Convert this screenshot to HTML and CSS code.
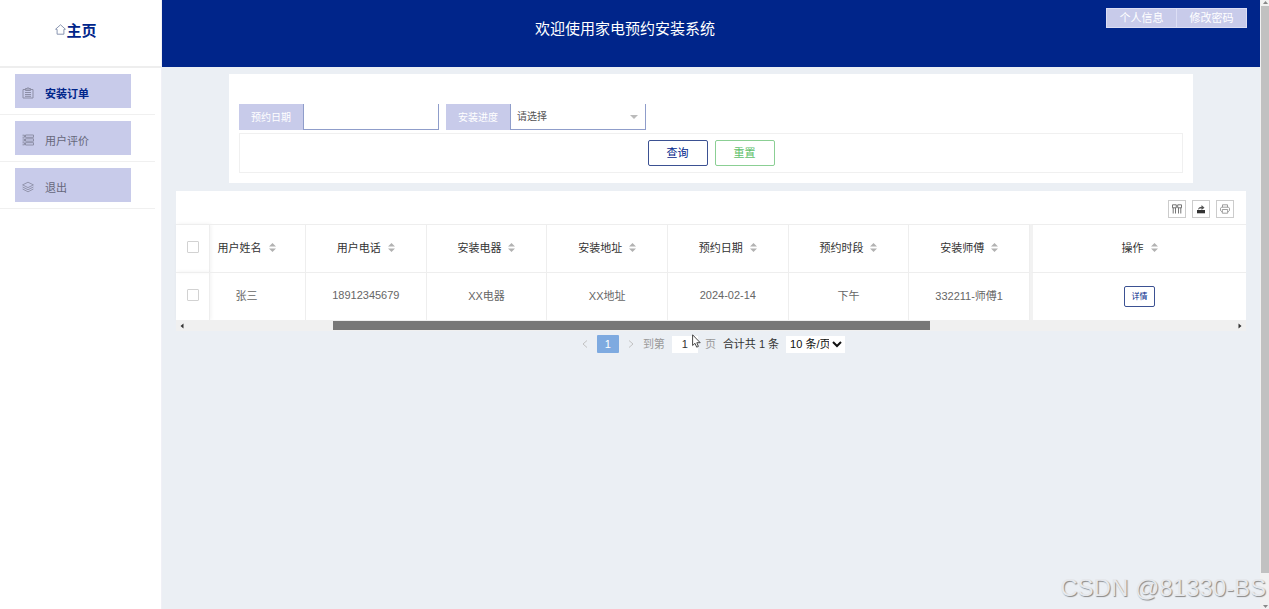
FILE: index.html
```
<!DOCTYPE html>
<html lang="zh-CN">
<head>
    <meta charset="UTF-8">
    <meta name="viewport" content="width=device-width, initial-scale=1.0">
    <title>家电预约安装系统</title>
    <link rel="stylesheet" href="styles.css">
</head>
<body>
    <svg class="sprite" width="0" height="0">
        <symbol id="sort" viewBox="0 0 7 9">
            <path d="M3.5 0 L7 3.6 H0 Z M0 5.4 H7 L3.5 9 Z" fill="#b2b2b2"/>
        </symbol>
    </svg>

    <div class="layout">
        <aside class="sidebar">
            <a class="logo" href="#">
                <svg width="11" height="11" viewBox="0 0 11 11" fill="none" stroke="#7d8aa8" stroke-width="0.9"><path d="M0.6 5.2 L5.5 0.8 L10.4 5.2 L8.9 5.4 V10.2 H2.1 V5.4 Z"/></svg>
                <span>主页</span>
            </a>
            <ul class="menu">
                <li>
                    <a class="active" href="#">
                        <svg width="12" height="12" viewBox="0 0 12 12" fill="none" stroke="#8c8ea6"><path d="M3.5 2.5 H1 V11 H11 V2.5 H8.5"/><path d="M3.5 3.5 V1.5 H5 L6 0.6 L7 1.5 H8.5 V3.5 Z" fill="#a9abc4"/><path d="M3 5.5 H9 M3 7.5 H9 M3 9.3 H9"/></svg>
                        <span>安装订单</span>
                    </a>
                </li>
                <li>
                    <a href="#">
                        <svg width="12" height="12" viewBox="0 0 12 12" fill="none" stroke="#8c8ea6"><path d="M3.5 1 H11.5 V3.3 H3.5 Z M3.5 4.8 H11.5 V7.2 H3.5 Z M3.5 8.7 H11.5 V11 H3.5 Z"/><path d="M0.5 1.2 H2.5 V3.2 H0.5 M0.5 5 H2.5 V7 H0.5 M0.5 8.8 H2.5 V10.8 H0.5"/></svg>
                        <span>用户评价</span>
                    </a>
                </li>
                <li>
                    <a href="#">
                        <svg width="12" height="12" viewBox="0 0 12 12" fill="none" stroke="#8c8ea6" stroke-width="0.9"><path d="M6 1.2 L11.4 3.9 L6 6.6 L0.6 3.9 Z"/><path d="M0.6 6 L6 8.7 L11.4 6 M0.6 8 L6 10.8 L11.4 8"/></svg>
                        <span>退出</span>
                    </a>
                </li>
            </ul>
        </aside>

        <div class="main">
            <header class="header">
                <h1>欢迎使用家电预约安装系统</h1>
                <div class="user-btns">
                    <button type="button">个人信息</button>
                    <button type="button">修改密码</button>
                </div>
            </header>

            <form class="search">
                <div class="fields">
                    <div class="field">
                        <label for="date">预约日期</label>
                        <input id="date" type="text">
                    </div>
                    <div class="field">
                        <label for="progress">安装进度</label>
                        <select id="progress">
                            <option>请选择</option>
                        </select>
                    </div>
                </div>
                <div class="actions">
                    <button class="btn btn-query" type="button">查询</button>
                    <button class="btn btn-reset" type="reset">重置</button>
                </div>
            </form>

            <section class="table-box">
                <div class="toolbar">
                    <button type="button" aria-label="筛选列">
                        <svg width="10" height="10" viewBox="0 0 10 10" fill="none" stroke="#666" stroke-width="0.9"><path d="M0.5 0.8 H4.3 V3.8 H0.5 Z M5.7 0.8 H9.5 V3.8 H5.7 Z M1.2 3.8 V9.5 M3.5 3.8 V9.5 M6.5 3.8 V9.5 M8.8 3.8 V9.5"/></svg>
                    </button>
                    <button type="button" aria-label="导出">
                        <svg width="10" height="10" viewBox="0 0 10 10"><path d="M1 6 H9 V9.3 H1 Z" fill="#333"/><path d="M2 6 C2.2 3.6 3.5 2.7 5.5 2.7 V1 L8.5 3.7 L5.5 6 V4.6 C4 4.5 3 5 2 6 Z" fill="#555"/></svg>
                    </button>
                    <button type="button" aria-label="打印">
                        <svg width="10" height="10" viewBox="0 0 10 10" fill="none" stroke="#888" stroke-width="0.8"><path d="M2.5 3.2 V0.8 H7.5 V3.2 M2.3 7.5 H1.5 L0.5 6.5 V4.2 L1.5 3.2 H8.5 L9.5 4.2 V6.5 L8.5 7.5 H7.7 M2.3 5.5 H7.7 V9.2 H2.3 Z"/></svg>
                    </button>
                </div>
                <table>
                    <colgroup>
                        <col class="col-check">
                        <col class="col-name">
                        <col span="6">
                        <col class="col-op">
                    </colgroup>
                    <thead>
                        <tr>
                            <th class="check"><input type="checkbox" aria-label="全选"></th>
                            <th class="name">用户姓名<svg class="sort"><use href="#sort"/></svg></th>
                            <th>用户电话<svg class="sort"><use href="#sort"/></svg></th>
                            <th>安装电器<svg class="sort"><use href="#sort"/></svg></th>
                            <th>安装地址<svg class="sort"><use href="#sort"/></svg></th>
                            <th>预约日期<svg class="sort"><use href="#sort"/></svg></th>
                            <th>预约时段<svg class="sort"><use href="#sort"/></svg></th>
                            <th>安装师傅<svg class="sort"><use href="#sort"/></svg></th>
                            <th class="op">操作<svg class="sort"><use href="#sort"/></svg></th>
                        </tr>
                    </thead>
                    <tbody>
                        <tr>
                            <td class="check"><input type="checkbox" aria-label="选择张三"></td>
                            <td class="name">张三</td>
                            <td>18912345679</td>
                            <td>XX电器</td>
                            <td>XX地址</td>
                            <td>2024-02-14</td>
                            <td>下午</td>
                            <td>332211-师傅1</td>
                            <td class="op"><button class="detail" type="button">详情</button></td>
                        </tr>
                    </tbody>
                </table>
                <div class="hscroll">
                    <svg width="4" height="6" viewBox="0 0 4 6"><path d="M3.5 0.5 V5.5 L0.5 3 Z" fill="#333"/></svg>
                    <div class="track"><div class="thumb"></div></div>
                    <svg width="4" height="6" viewBox="0 0 4 6"><path d="M0.5 0.5 V5.5 L3.5 3 Z" fill="#333"/></svg>
                </div>
            </section>

            <div class="pager">
                <button class="arrow" type="button" aria-label="上一页"><svg width="6" height="8" viewBox="0 0 6 8" fill="none" stroke="#c2c2c2"><path d="M5 0.5 L1 4 L5 7.5"/></svg></button>
                <button class="current" type="button">1</button>
                <button class="arrow" type="button" aria-label="下一页"><svg width="6" height="8" viewBox="0 0 6 8" fill="none" stroke="#c2c2c2"><path d="M1 0.5 L5 4 L1 7.5"/></svg></button>
                <label for="page">到第</label>
                <input id="page" type="text" value="1">
                <span class="unit">页</span>
                <span class="total">合计共 1 条</span>
                <select aria-label="每页条数">
                    <option>10 条/页</option>
                </select>
            </div>
        </div>

        <div class="vscroll">
            <svg width="5" height="3" viewBox="0 0 5 3"><path d="M0 3 L2.5 0 L5 3 Z" fill="#888"/></svg>
            <div class="thumb"></div>
            <svg width="5" height="3" viewBox="0 0 5 3"><path d="M0 0 L2.5 3 L5 0 Z" fill="#888"/></svg>
        </div>
    </div>

    <svg class="cursor" width="9" height="14" viewBox="0 0 9 14"><path d="M0.6 0.8 V11.5 L3 9.3 L4.7 13.2 L6.4 12.4 L4.8 8.7 H8.2 Z" fill="#fff" stroke="#333" stroke-width="0.9"/></svg>
    <div class="watermark">CSDN @81330-BS</div>
</body>
</html>
```

FILE: styles.css
```
* {
    box-sizing: border-box;
}

body {
    margin: 0;
    font-family: "Liberation Sans", "Noto Sans CJK SC", sans-serif;
    font-size: 11px;
    color: #666;
    background-color: #ebeff4;
    overflow: hidden;
}

button, input, select {
    font-family: inherit;
    font-size: inherit;
    margin: 0;
}

button {
    cursor: pointer;
    padding: 0 0 2px;
}

a {
    text-decoration: none;
    color: inherit;
}

svg {
    flex: none;
}

.sprite {
    position: absolute;
}

.layout {
    display: flex;
    height: 100vh;
}

/* sidebar */
.sidebar {
    flex: none;
    width: 162px;
    background-color: #fff;
    border-right: 1px solid #f0f0f6;
}

.logo {
    display: flex;
    align-items: center;
    justify-content: center;
    height: 68px;
    padding: 0 9px 8px 0;
    border-bottom: 2px solid #eee;
    color: #00258a;
    font-size: 15px;
    font-weight: bold;
}

.menu {
    list-style: none;
    margin: 0 6px 0 0;
    padding: 0;
}

.menu li {
    padding: 6px 24px 6px 15px;
    border-bottom: 1px solid #f0f0f0;
}

.menu a {
    display: flex;
    align-items: center;
    gap: 11px;
    height: 34px;
    padding: 3px 7px 0;
    background-color: #c8cbea;
    color: #66677a;
}

.menu a.active {
    color: #00258a;
    font-weight: bold;
}

/* main area */
.main {
    flex: 1;
    min-width: 0;
}

.header {
    display: flex;
    align-items: flex-start;
    gap: 18px;
    height: 67px;
    padding: 8px 13px 0 0;
    background-color: #00258a;
}

.header h1 {
    flex: 1;
    margin: 0;
    padding-top: 10px;
    color: #fff;
    font-size: 15px;
    line-height: 22px;
    font-weight: normal;
    text-align: center;
}

.user-btns {
    display: flex;
}

.user-btns button {
    width: 71px;
    height: 20px;
    border: 1px solid #dcdef4;
    background-color: #c8cbea;
    color: #fff;
}

.user-btns button + button {
    width: 70px;
    border-left: none;
}

.search {
    margin: 7px 67px 0;
    padding: 30px 10px 10px;
    background-color: #fff;
}

.fields {
    display: flex;
    gap: 7px;
    font-size: 10px;
}

.field {
    display: flex;
    width: 200px;
    height: 26px;
}

.field label {
    display: flex;
    align-items: center;
    justify-content: center;
    width: 64px;
    padding-bottom: 2px;
    background-color: #c8cbea;
    color: #fff;
}

.field input, .field select {
    flex: 1;
    min-width: 0;
    padding: 0 6px;
    border: 1px solid #8f9dca;
    border-top: none;
    border-radius: 0;
    background-color: #fff;
    color: #555;
}

.field select {
    appearance: none;
    background: #fff url("data:image/svg+xml,%3Csvg xmlns='http://www.w3.org/2000/svg' width='8' height='4'%3E%3Cpath d='M0 0H8L4 4Z' fill='%23bbb'/%3E%3C/svg%3E") no-repeat right 7px center;
}

.actions {
    display: flex;
    justify-content: center;
    gap: 7px;
    margin-top: 3px;
    padding: 6px 0;
    border: 1px solid #f0f0f0;
}

.btn {
    width: 60px;
    height: 26px;
    border-radius: 2px;
    background-color: #fff;
}

.btn-query {
    border: 1px solid #3b5192;
    color: #00258a;
}

.btn-reset {
    border: 1px solid #8bcf94;
    color: #5dc069;
}

/* table */
.table-box {
    margin: 8px 14px 0;
    background-color: #fff;
}

.toolbar {
    display: flex;
    align-items: center;
    justify-content: flex-end;
    gap: 6px;
    height: 33px;
    padding: 2px 12px 0 0;
}

.toolbar button {
    display: flex;
    align-items: center;
    justify-content: center;
    width: 18px;
    height: 18px;
    padding: 0;
    border: 1px solid #ccc;
    background-color: #fff;
}

table {
    width: 100%;
    table-layout: fixed;
    border-collapse: separate;
    border-spacing: 0;
}

.col-check {
    width: 34px;
}

.col-name {
    width: 96px;
}

.col-op {
    width: 216px;
}

th, td {
    height: 48px;
    padding: 0 0 4px;
    border-top: 1px solid #eee;
    border-right: 1px solid #eee;
    font-weight: normal;
    text-align: center;
    white-space: nowrap;
}

th {
    color: #333;
}

.check {
    box-shadow: 1px 0 4px rgba(0, 0, 0, 0.06);
}

.check input {
    display: block;
    appearance: none;
    width: 12px;
    height: 12px;
    margin: 0 auto;
    border: 1px solid #d2d2d2;
    border-radius: 1px;
    background-color: #fff;
}

.name {
    padding-right: 22px;
}

.op {
    border-left: 3px solid #f2f2f2;
    border-right: none;
}

td.op {
    padding-bottom: 0;
}

.sort {
    width: 7px;
    height: 9px;
    margin-left: 7px;
    vertical-align: 0;
}

.detail {
    width: 31px;
    height: 21px;
    border: 1px solid #3b5192;
    border-radius: 2px;
    background-color: #fff;
    color: #00258a;
    font-size: 8px;
}

.hscroll {
    display: flex;
    align-items: center;
    height: 11px;
    padding: 0 4px;
    background-color: #f0f0f0;
}

.hscroll .track {
    flex: 1;
    padding-left: 14%;
}

.hscroll .thumb {
    width: 66%;
    height: 9px;
    background-color: #787878;
}

.pager {
    display: flex;
    align-items: center;
    justify-content: center;
    height: 18px;
    margin-top: 4px;
    color: #999;
}

.pager label, .pager span {
    padding-bottom: 2px;
}

.pager .arrow {
    display: flex;
    padding: 0 5px;
    border: none;
    background: none;
}

.pager .current {
    width: 22px;
    height: 18px;
    margin: 0 4px;
    padding: 0;
    border: none;
    border-radius: 1px;
    background-color: #7eaae0;
    color: #fff;
}

.pager label {
    margin-left: 4px;
}

.pager input {
    width: 26px;
    height: 17px;
    margin: 0 7px;
    padding: 0;
    border: none;
    background-color: #fff;
    color: #333;
    text-align: center;
}

.pager .total {
    margin: 0 7px;
    color: #333;
}

.pager select {
    width: 59px;
    height: 17px;
    border: none;
    background-color: #fff;
    color: #111;
}

/* page scrollbar */
.vscroll {
    flex: none;
    display: flex;
    flex-direction: column;
    align-items: center;
    width: 9px;
    padding: 1px 0 1px 1px;
    background-color: #f1f1f1;
}

.vscroll .thumb {
    flex: 1;
    width: 8px;
    margin: 2px 0 32px;
    background-color: #c1c1c1;
}

.cursor {
    position: absolute;
    left: 692px;
    top: 334px;
}

.watermark {
    position: absolute;
    right: 3px;
    bottom: 7px;
    font-size: 24px;
    color: #e6e8ec;
    text-shadow: 1px 1px 1px #888;
}
```
